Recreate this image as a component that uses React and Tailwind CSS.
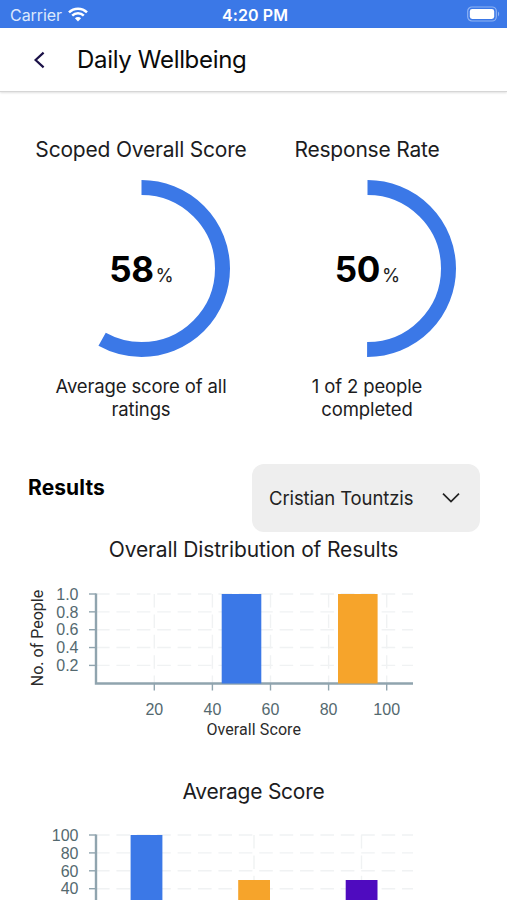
import React from 'react';

const BLUE = '#3b78e7';
const ORANGE = '#f6a42b';
const PURPLE = '#4f0bbf';
const AXIS = '#90a4ae';
const TICK_LABEL = '#54696f';
const GRID = '#f0f2f3';

const StatusBar = () => (
  <div className="flex h-7 items-center justify-between bg-[#3b78e7] pr-[7px] pl-[10px] text-white">
    <div className="flex flex-1 items-center gap-[6px]">
      <span className="pt-[1px] text-[16px] leading-7 tracking-[-0.05px] text-[#dce8fc]">Carrier</span>
      <svg width="20" height="15" viewBox="0 0 20 15" fill="none" stroke="#fff" strokeWidth="2.5">
        <path d="M1 5.4a12.8 12.8 0 0 1 18 0" />
        <path d="M4.2 8.7a8.2 8.2 0 0 1 11.6 0" />
        <path d="M10 14.4l-3.1-3.1a4.4 4.4 0 0 1 6.2 0z" fill="#fff" stroke="none" />
      </svg>
    </div>
    <span className="pt-[1px] text-[16px] leading-7 font-semibold tracking-[0.1px]">4:20 PM</span>
    <div className="flex flex-1 justify-end">
      <svg width="33" height="16" viewBox="0 0 33 16" fill="none">
        <rect x="0.7" y="1" width="28.6" height="14" rx="4.2" stroke="#8fb3f3" strokeWidth="1.2" />
        <rect x="2.8" y="3" width="24.4" height="10" rx="2.4" fill="#fff" />
        <path d="M31 5.6c1.6.8 1.6 4 0 4.8z" fill="#8fb3f3" />
      </svg>
    </div>
  </div>
);

const Header = () => (
  <header className="flex h-[64px] items-center border-b border-[#d6d6d6] pl-[33px] shadow-[0_1px_2px_rgba(0,0,0,0.12)]">
    <svg width="13" height="18" viewBox="0 0 13 18" fill="none" stroke="#1b1148" strokeWidth="2.2">
      <path d="M10.6 1.6L2.6 9l8 7.4" />
    </svg>
    <h1 className="ml-[31px] pt-[1px] text-[24px] leading-8 tracking-[-0.32px] text-[#0a0a0a]">Daily Wellbeing</h1>
  </header>
);

const RADIUS = 81;
const CIRCUMFERENCE = 2 * Math.PI * RADIUS;

const ScoreRing = ({ title, value, lines }) => (
  <section className="flex w-[226px] flex-col items-center">
    <h2 className="text-[21px] leading-7 tracking-[-0.2px] whitespace-nowrap text-[#1c1c1e]">{title}</h2>
    <div className="mt-[16px] grid h-[177px] w-[177px] place-items-center">
      <svg className="col-start-1 row-start-1" width="177" height="177" viewBox="0 0 177 177">
        <circle
          cx="88.5"
          cy="88.5"
          r={RADIUS}
          fill="none"
          stroke={BLUE}
          strokeWidth="15"
          strokeDasharray={`${(CIRCUMFERENCE * value) / 100} ${CIRCUMFERENCE}`}
          transform="rotate(-90 88.5 88.5)"
        />
      </svg>
      <div className="col-start-1 row-start-1 flex items-baseline pt-[6px] pl-[1px] leading-10">
        <span className="text-[35px] font-bold tracking-[-0.4px] text-black">{value}</span>
        <span className="ml-[2px] text-[18.5px] text-[#222]">%</span>
      </div>
    </div>
    <p className="mt-[18px] text-center text-[18.5px] leading-[23px] tracking-[-0.13px] text-[#1c1c1e]">
      {lines.map((line) => (
        <span key={line} className="block">{line}</span>
      ))}
    </p>
  </section>
);

// Shared frame of both charts: dashed grid, axes and tick labels
const BarChart = ({ height, bottom, yTicks, xTicks, gridX, bars, children }) => (
  <svg className="block" width="507" height={height} viewBox={`0 0 507 ${height}`}>
    <g stroke={GRID} strokeWidth="1.4" strokeDasharray="13.6 6.8">
      {yTicks.map((t) => (
        <line key={t.label} x1="96" x2="413" y1={t.y} y2={t.y} />
      ))}
      {gridX.map((x) => (
        <line key={x} x1={x} x2={x} y1="19" y2={bottom} />
      ))}
    </g>
    <path d={`M96 18.5V${bottom}H413`} fill="none" stroke={AXIS} strokeWidth="2.4" />
    {yTicks.map((t) => (
      <g key={t.label}>
        <line x1="89" x2="96" y1={t.y} y2={t.y} stroke={AXIS} strokeWidth="1.4" />
        <text x="78.5" y={t.y + 5.7} textAnchor="end" fontSize="16" fill={TICK_LABEL}>{t.label}</text>
      </g>
    ))}
    {xTicks.map((t) => (
      <g key={t.label}>
        <line x1={t.x} x2={t.x} y1={bottom} y2={bottom + 7} stroke={AXIS} strokeWidth="1.4" />
        <text x={t.x} y={bottom + 31.2} textAnchor="middle" fontSize="16" fill={TICK_LABEL}>{t.label}</text>
      </g>
    ))}
    {bars.map((b) => (
      <rect key={b.x} x={b.x} y={b.y} width={b.width} height={bottom - b.y} fill={b.color} />
    ))}
    {children}
  </svg>
);

const distribution = {
  yTicks: ['1.0', '0.8', '0.6', '0.4', '0.2'].map((label, i) => ({ label, y: 19 + i * 17.85 })),
  xTicks: ['20', '40', '60', '80', '100'].map((label, i) => ({ label, x: 154.3 + i * 58.1 })),
  bars: [
    { x: 221.7, y: 19, width: 39.6, color: BLUE },
    { x: 338, y: 19, width: 39.6, color: ORANGE },
  ],
};

const average = {
  yTicks: ['100', '80', '60', '40'].map((label, i) => ({ label, y: 19 + i * 17.9 })),
  bars: [
    { x: 130.6, y: 19, width: 31.8, color: BLUE },
    { x: 238.2, y: 64, width: 31.8, color: ORANGE },
    { x: 345.7, y: 64, width: 31.8, color: PURPLE },
  ],
};

const App = () => {
  return (
    <div className="h-[900px] w-[507px] overflow-hidden bg-white font-['Inter',sans-serif]">
      <StatusBar />
      <Header />

      <main className="pt-[44px]">
        <div className="flex pl-[28px]">
          <ScoreRing title="Scoped Overall Score" value={58} lines={['Average score of all', 'ratings']} />
          <ScoreRing title="Response Rate" value={50} lines={['1 of 2 people', 'completed']} />
        </div>

        <div className="mt-[43px] flex items-start justify-between pr-[27px] pl-[28px]">
          <h2 className="mt-[10px] text-[21px] leading-7 font-bold tracking-[0.1px] text-black">Results</h2>
          <button className="flex h-[68px] w-[228px] items-center justify-between rounded-[12px] bg-[#eeeeee] pr-[20px] pl-[17px]">
            <span className="pt-[2px] text-[18.5px] tracking-[-0.1px] text-[#222]">Cristian Tountzis</span>
            <svg width="18" height="12" viewBox="0 0 18 12" fill="none" stroke="#222" strokeWidth="1.7">
              <path d="M1 1.6l8 8 8-8" />
            </svg>
          </button>
        </div>

        <h3 className="mt-[4px] text-center text-[21px] leading-7 tracking-[-0.13px] text-[#1c1c1e]">Overall Distribution of Results</h3>
        <div className="mt-[11px] font-['Liberation_Sans',sans-serif]">
          <BarChart
            height={175}
            bottom={108.5}
            yTicks={distribution.yTicks}
            xTicks={distribution.xTicks}
            gridX={distribution.xTicks.map((t) => t.x)}
            bars={distribution.bars}
          >
            <g className="font-['Roboto',sans-serif]" fontSize="16" fill="#2b2b2b" textAnchor="middle">
              <text x="253.7" y="160" textLength="94.5">Overall Score</text>
              <text transform="translate(43 63) rotate(-90)">No. of People</text>
            </g>
          </BarChart>
        </div>

        <h3 className="mt-[28px] text-center text-[21px] leading-7 tracking-[-0.25px] text-[#1c1c1e]">Average Score</h3>
        <div className="mt-[10px] font-['Liberation_Sans',sans-serif]">
          <BarChart
            height={175}
            bottom={108.5}
            yTicks={average.yTicks}
            xTicks={[]}
            gridX={[146.5, 254, 361.5]}
            bars={average.bars}
          />
        </div>
      </main>
    </div>
  );
};

export default App;
